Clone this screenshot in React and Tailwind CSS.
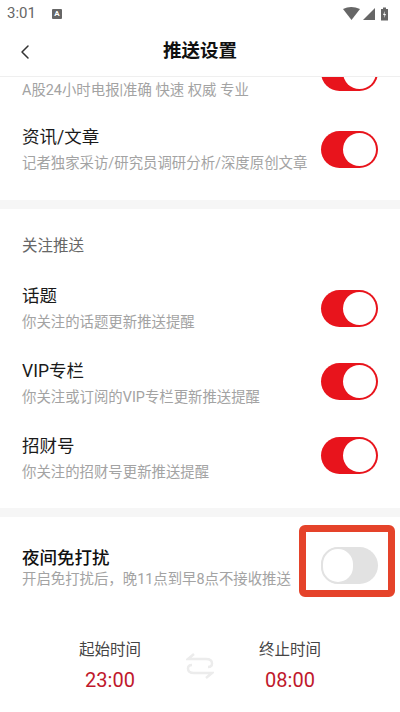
import React from 'react';
import { ChevronLeft } from 'lucide-react';

const Toggle = ({ on = true, className = '' }) => (
  <div
    className={`w-[57px] h-[37px] rounded-full flex items-center shrink-0 ${
      on ? 'bg-[#e8141c] justify-end pr-[2px]' : 'bg-[#e2e2e2] justify-start'
    } ${className}`}
  >
    {on ? (
      <div className="w-[33px] h-[33px] rounded-full bg-white"></div>
    ) : (
      <div className="w-[34px] h-[37px] rounded-full bg-white border-2 border-[#e2e2e2]"></div>
    )}
  </div>
);

const Row = ({ title, desc, toggleClass }) => (
  <div className="h-[75px] px-[22px] flex items-center justify-between">
    <div>
      <div className="text-[17.5px] leading-[24px] text-[#1a1a1a]">{title}</div>
      <div className="text-[14.4px] leading-[20px] mt-[5px] text-[#a3a3a3]">{desc}</div>
    </div>
    <Toggle className={toggleClass} />
  </div>
);

const SwapIcon = () => (
  <svg width="28" height="26" viewBox="0 0 28 26" fill="none" stroke="#ececec" strokeWidth="2.5">
    <path d="M8 1 L2 6 H20 Q26 6 26 10.5 Q26 14 22 14" />
    <path d="M20 25 L26 20 H8 Q2 20 2 15.5 Q2 12 6 12" />
  </svg>
);

export default function App() {
  return (
    <div className="relative w-[400px] h-[712px] overflow-hidden bg-white font-['Roboto','Noto_Sans_CJK_SC',sans-serif]">
      {/* status bar */}
      <div className="absolute top-0 left-0 w-full z-10 bg-white">
        <div className="h-[27px] px-[7px] flex items-center justify-between">
          <div className="flex items-center gap-[16px]">
            <span className="text-[15px] text-[#666]">3:01</span>
            <span className="w-[10px] h-[10px] bg-[#666] rounded-[1px] text-white text-[8px] leading-[10px] text-center font-bold">A</span>
          </div>
          <svg width="46" height="14" viewBox="0 0 46 14" className="mr-[4px]">
            <path d="M0 2 Q8 -2 17 2 L8.5 13 Z" fill="#666" />
            <path d="M20 13 L32 1 V13 Z" fill="#666" />
            <path d="M38 2 H40 V0.5 H43 V2 H45 V13.5 H38 Z" fill="#666" />
            <path d="M42 4 L40 8 H41.5 L41 11 L43 7 H41.5 Z" fill="#fff" />
          </svg>
        </div>
        <div className="h-[50px] relative flex items-center justify-center border-b border-[#efefef]">
          <ChevronLeft className="absolute left-[13px] top-[13px] text-[#333]" size={24} strokeWidth={1.5} />
          <span className="text-[18.5px] font-bold text-[#111]">推送设置</span>
        </div>
      </div>

      {/* scrolled content, first row is cut off under the header */}
      <div className="pt-[39px]">
        <div className="-mb-[2px]">
          <Row title="快讯" desc="A股24小时电报|准确 快速 权威 专业" toggleClass="-mt-[9px]" />
        </div>
        <Row title="资讯/文章" desc="记者独家采访/研究员调研分析/深度原创文章" />
        <div className="mt-[13px] h-[9px] bg-[#f6f6f6]"></div>
        <div className="h-[62px] pt-[14px] pl-[22px] flex items-center text-[15.5px] text-[#666]">关注推送</div>
        <Row title="话题" desc="你关注的话题更新推送提醒" />
        <Row title="VIP专栏" desc="你关注或订阅的VIP专栏更新推送提醒" toggleClass="-mt-[4px]" />
        <Row title="招财号" desc="你关注的招财号更新推送提醒" toggleClass="-mt-[6px]" />
        <div className="mt-[12px] h-[9px] bg-[#f6f6f6]"></div>
        <div className="h-[96px] px-[22px] flex items-center justify-between">
          <div className="pt-[5px]">
            <div className="text-[17.5px] leading-[24px] font-medium text-[#111]">夜间免打扰</div>
            <div className="text-[14.4px] leading-[20px] text-[#a3a3a3]">开启免打扰后，晚11点到早8点不接收推送</div>
          </div>
          <Toggle on={false} />
        </div>
        <div className="flex items-start justify-center mt-[26px]">
          <div className="w-[90px] text-center">
            <div className="text-[15.5px] leading-[22px] text-[#444]">起始时间</div>
            <div className="text-[20px] leading-[26px] mt-[6px] text-[#c0182c]">23:00</div>
          </div>
          <div className="w-[90px] flex justify-center pt-[14px]">
            <SwapIcon />
          </div>
          <div className="w-[90px] text-center">
            <div className="text-[15.5px] leading-[22px] text-[#444]">终止时间</div>
            <div className="text-[20px] leading-[26px] mt-[6px] text-[#c0182c]">08:00</div>
          </div>
        </div>
      </div>

      {/* highlight box over the switch */}
      <div className="absolute left-[299px] top-[525px] w-[96px] h-[72px] border-[7px] border-[#e5432a] rounded-[6px]"></div>
    </div>
  );
}
